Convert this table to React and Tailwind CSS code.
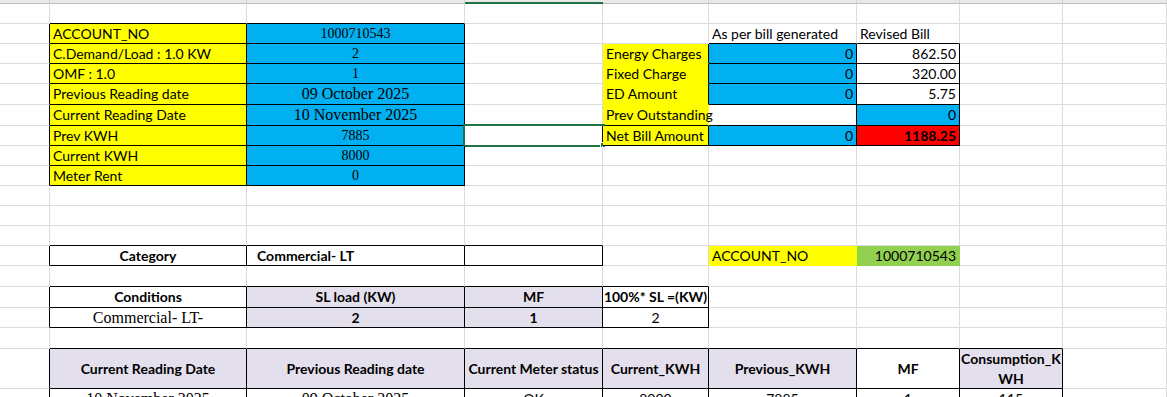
import React from 'react'

const COL_W = [50, 197, 218, 138, 106, 148, 103, 103, 104]

const FILL = {
  none: { bg: '', r: 'border-r-[#dadcdd]', b: 'border-b-[#dadcdd]' },
  white: { bg: 'bg-white', r: 'border-r-[#dadcdd]', b: 'border-b-[#dadcdd]' },
  yellow: { bg: 'bg-[#ffff00]', r: 'border-r-[#ffff00]', b: 'border-b-[#ffff00]' },
  blue: { bg: 'bg-[#00b0f0]', r: 'border-r-[#00b0f0]', b: 'border-b-[#00b0f0]' },
  red: { bg: 'bg-[#ff0000]', r: 'border-r-[#ff0000]', b: 'border-b-[#ff0000]' },
  green: { bg: 'bg-[#92d050]', r: 'border-r-[#92d050]', b: 'border-b-[#92d050]' },
  lav: { bg: 'bg-[#e4dfec]', r: 'border-r-[#e4dfec]', b: 'border-b-[#e4dfec]' },
}

const FONT = {
  sans: "font-['Lato',sans-serif] text-[14px]",
  serif: "font-['Liberation_Serif',serif] text-[16px]",
  num: "font-['Liberation_Serif',serif] text-[14px]",
}

const ALIGN = {
  l: 'justify-start pl-[3px]',
  c: 'justify-center',
  r: 'justify-end pr-[3px]',
}

// cells keyed "row,col" — rows start under the column header strip
const cells = {
  // left info block
  '1,1': { t: 'ACCOUNT_NO', fill: 'yellow', box: true },
  '1,2': { t: '1000710543', fill: 'blue', box: true, a: 'c', f: 'num' },
  '2,1': { t: 'C.Demand/Load : 1.0 KW', fill: 'yellow', box: true },
  '2,2': { t: '2', fill: 'blue', box: true, a: 'c', f: 'num' },
  '3,1': { t: 'OMF : 1.0', fill: 'yellow', box: true },
  '3,2': { t: '1', fill: 'blue', box: true, a: 'c', f: 'num' },
  '4,1': { t: 'Previous Reading date', fill: 'yellow', box: true },
  '4,2': { t: '09 October 2025', fill: 'blue', box: true, a: 'c', f: 'serif' },
  '5,1': { t: 'Current Reading Date', fill: 'yellow', box: true },
  '5,2': { t: '10 November 2025', fill: 'blue', box: true, a: 'c', f: 'serif' },
  '6,1': { t: 'Prev KWH', fill: 'yellow', box: true },
  '6,2': { t: '7885', fill: 'blue', box: true, a: 'c', f: 'num' },
  '6,3': { selected: true },
  '7,1': { t: 'Current KWH', fill: 'yellow', box: true },
  '7,2': { t: '8000', fill: 'blue', box: true, a: 'c', f: 'num' },
  '8,1': { t: 'Meter Rent', fill: 'yellow', box: true },
  '8,2': { t: '0', fill: 'blue', box: true, a: 'c', f: 'num' },

  // bill comparison
  '1,5': { t: 'As per bill generated' },
  '1,6': { t: 'Revised Bill' },
  '2,4': { t: 'Energy Charges', fill: 'yellow' },
  '2,5': { t: '0', fill: 'blue', box: true, a: 'r' },
  '2,6': { t: '862.50', fill: 'white', box: true, a: 'r' },
  '3,4': { t: 'Fixed Charge', fill: 'yellow' },
  '3,5': { t: '0', fill: 'blue', box: true, a: 'r' },
  '3,6': { t: '320.00', fill: 'white', box: true, a: 'r' },
  '4,4': { t: 'ED Amount', fill: 'yellow' },
  '4,5': { t: '0', fill: 'blue', box: true, a: 'r' },
  '4,6': { t: '5.75', fill: 'white', box: true, a: 'r' },
  '5,4': { t: 'Prev Outstanding', fill: 'yellow' },
  '5,6': { t: '0', fill: 'blue', box: true, a: 'r' },
  '6,4': { t: 'Net Bill Amount', fill: 'yellow', box: true },
  '6,5': { t: '0', fill: 'blue', box: true, a: 'r' },
  '6,6': { t: '1188.25', fill: 'red', box: true, a: 'r', bold: true },

  // category
  '12,1': { t: 'Category', fill: 'white', box: true, a: 'c', bold: true },
  '12,2': { t: 'Commercial- LT', fill: 'white', box: true, bold: true, pad: true },
  '12,3': { fill: 'white', box: true },
  '12,5': { t: 'ACCOUNT_NO', fill: 'yellow' },
  '12,6': { t: '1000710543', fill: 'green', a: 'r' },

  // conditions
  '14,1': { t: 'Conditions', fill: 'white', box: true, a: 'c', bold: true },
  '14,2': { t: 'SL load (KW)', fill: 'lav', box: true, a: 'c', bold: true },
  '14,3': { t: 'MF', fill: 'lav', box: true, a: 'c', bold: true },
  '14,4': { t: '100%* SL =(KW)', fill: 'white', box: true, a: 'c', bold: true },
  '15,1': { t: 'Commercial- LT-', fill: 'white', box: true, a: 'c', f: 'serif' },
  '15,2': { t: '2', fill: 'lav', box: true, a: 'c', bold: true },
  '15,3': { t: '1', fill: 'lav', box: true, a: 'c', bold: true },
  '15,4': { t: '2', fill: 'white', box: true, a: 'c' },

  // readings table
  '17,1': { t: 'Current Reading Date', fill: 'lav', box: true, a: 'c', bold: true },
  '17,2': { t: 'Previous Reading date', fill: 'lav', box: true, a: 'c', bold: true },
  '17,3': { t: 'Current Meter status', fill: 'lav', box: true, a: 'c', bold: true },
  '17,4': { t: 'Current_KWH', fill: 'lav', box: true, a: 'c', bold: true },
  '17,5': { t: 'Previous_KWH', fill: 'lav', box: true, a: 'c', bold: true },
  '17,6': { t: 'MF', fill: 'white', box: true, a: 'c', bold: true },
  '17,7': { t: 'Consumption_KWH', fill: 'lav', box: true, a: 'c', bold: true, wrap: true },
  '18,1': { t: '10 November 2025', fill: 'white', box: true, a: 'c', f: 'serif' },
  '18,2': { t: '09 October 2025', fill: 'white', box: true, a: 'c', f: 'serif' },
  '18,3': { t: 'OK', fill: 'white', box: true, a: 'c' },
  '18,4': { t: '8000', fill: 'white', box: true, a: 'c' },
  '18,5': { t: '7885', fill: 'white', box: true, a: 'c' },
  '18,6': { t: '1', fill: 'white', box: true, a: 'c' },
  '18,7': { t: '115', fill: 'white', box: true, a: 'c' },
}

const ROW_COUNT = 19

function Cell({ r, c }) {
  const cell = cells[`${r},${c}`] || {}
  const fill = FILL[cell.fill || 'none']
  const right = cells[`${r},${c + 1}`]
  const below = cells[`${r + 1},${c}`]
  const blackR = cell.box || (right && right.box)
  const blackB = cell.box || (below && below.box)

  const cls = [
    'relative flex items-center overflow-visible border-r border-b min-w-0',
    fill.bg,
    blackR ? 'border-r-black' : fill.r,
    blackB ? 'border-b-black' : fill.b,
    FONT[cell.f || 'sans'],
    cell.pad ? 'justify-start pl-[10px]' : ALIGN[cell.a || 'l'],
    cell.bold ? 'font-bold' : 'font-normal',
    cell.wrap ? 'leading-[20px] text-center break-all whitespace-normal' : 'leading-[18px] whitespace-nowrap',
  ].join(' ')

  return (
    <div className={cls}>
      {cell.t && <span className="text-black">{cell.t}</span>}
      {cell.selected && (
        <>
          <div className="absolute -left-[2px] -top-[2px] w-[142px] h-[23px] border-2 border-[#217346]" />
          <div className="absolute -right-[4px] -bottom-[3px] w-[6px] h-[6px] bg-[#217346] border border-white" />
        </>
      )}
    </div>
  )
}

export default function App() {
  return (
    <div className="w-[1167px] h-[397px] overflow-hidden bg-white text-black">
      {/* column header edge */}
      <div className="flex h-[4px]">
        {COL_W.map((w, i) => (
          <div
            key={i}
            style={{ width: w }}
            className={
              i === 3
                ? 'h-full bg-[#e9e9e9] border-b-2 border-t border-t-[#e9e9e9] border-b-[#217346]'
                : 'h-full bg-[#e9e9e9] border-r border-r-[#d4d4d4] border-b border-b-[#bdbdbd]'
            }
          />
        ))}
      </div>

      <div className="grid grid-cols-[50px_197px_218px_138px_106px_148px_103px_103px_104px] grid-rows-[20px_20px_20px_20px_21px_21px_20px_20px_20px_20px_20px_20px_20px_21px_21px_20px_21px_40px_20px]">
        {Array.from({ length: ROW_COUNT }).map((_, r) =>
          COL_W.map((_, c) => <Cell key={`${r}-${c}`} r={r} c={c} />)
        )}
      </div>
    </div>
  )
}
